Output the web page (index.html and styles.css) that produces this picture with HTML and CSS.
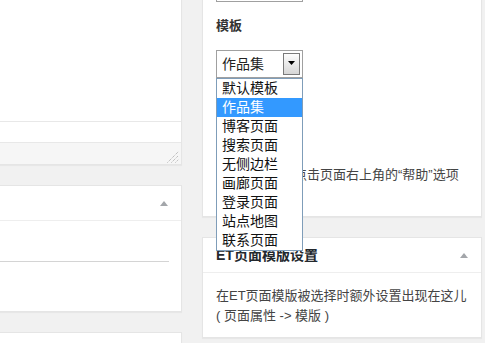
FILE: index.html
```html
<!DOCTYPE html>
<html lang="zh-CN">
  <head>
    <meta charset="UTF-8" />
    <meta name="viewport" content="width=device-width, initial-scale=1.0" />
    <title>编辑页面</title>
    <link rel="stylesheet" href="styles.css">
  </head>
  <body>
    <div class="page">
      <div class="main">
        <div class="box editor-box">
          <div class="editor-area"></div>
          <div class="editor-status"></div>
          <div class="editor-footer">
            <svg class="grip" width="12" height="12" viewBox="0 0 12 12">
              <line x1="0.5" y1="11.5" x2="11.5" y2="0.5" />
              <line x1="4.5" y1="11.5" x2="11.5" y2="4.5" />
              <line x1="8.5" y1="11.5" x2="11.5" y2="8.5" />
            </svg>
          </div>
        </div>

        <div class="box">
          <div class="box-head">
            <span class="title"></span>
            <svg class="toggle" width="8" height="5" viewBox="0 0 8 5"><polygon points="0,5 4,0 8,5" /></svg>
          </div>
          <div class="box-inside excerpt">
            <div class="field"></div>
          </div>
        </div>

        <div class="box">
          <div class="box-head">
            <span class="title"></span>
          </div>
        </div>
      </div>

      <div class="side">
        <div class="box">
          <h2 class="box-head">
            <span class="title">页面属性</span>
            <svg class="toggle" width="8" height="5" viewBox="0 0 8 5"><polygon points="0,5 4,0 8,5" /></svg>
          </h2>
          <div class="box-inside">
            <p class="label">父级</p>
            <div class="select">
              <span>(无父级)</span>
              <span class="select-btn">
                <svg width="7" height="4" viewBox="0 0 7 4"><polygon points="0,0 7,0 3.5,4" /></svg>
              </span>
            </div>

            <p class="label">模板</p>
            <div class="select-wrap">
              <div class="select">
                <span>作品集</span>
                <span class="select-btn">
                  <svg width="7" height="4" viewBox="0 0 7 4"><polygon points="0,0 7,0 3.5,4" /></svg>
                </span>
              </div>
              <ul class="dropdown">
                <li>默认模板</li>
                <li class="selected">作品集</li>
                <li>博客页面</li>
                <li>搜索页面</li>
                <li>无侧边栏</li>
                <li>画廊页面</li>
                <li>登录页面</li>
                <li>站点地图</li>
                <li>联系页面</li>
              </ul>
            </div>

            <p class="label">排序</p>
            <input class="order" type="text" value="0" />

            <p class="help">需要帮助？请点击页面右上角的“帮助”选项卡。</p>
          </div>
        </div>

        <div class="box">
          <h2 class="box-head">
            <span class="title">ET页面模版设置</span>
            <svg class="toggle" width="8" height="5" viewBox="0 0 8 5"><polygon points="0,5 4,0 8,5" /></svg>
          </h2>
          <div class="box-inside">
            <p class="note">在ET页面模版被选择时额外设置出现在这儿<br />( 页面属性 -&gt; 模版 )</p>
          </div>
        </div>
      </div>
    </div>
  </body>
</html>
```

FILE: styles.css
```css
body {
  margin: 0;
  background: #f1f1f1;
  color: #444;
  font-family: "Liberation Sans", "Noto Sans CJK SC", sans-serif;
  font-size: 13px;
  line-height: 20px;
  overflow: hidden;
}
/* page is scrolled down a bit */
.page {
  display: flex;
  gap: 20px;
  margin-top: -109px;
}
.main {
  flex: 0 0 182px;
}
.side {
  flex: 0 0 280px;
}
.box {
  background: #fff;
  border: 1px solid #e5e5e5;
  box-shadow: 0 1px 1px rgba(0, 0, 0, 0.04);
  margin-bottom: 20px;
}
.main .box {
  border-left: 0;
}
.box-head {
  display: flex;
  justify-content: space-between;
  align-items: center;
  height: 35px;
  box-sizing: border-box;
  margin: 0;
  padding: 8px 13px;
  border-bottom: 1px solid #eee;
  font-size: 14px;
  font-weight: bold;
  line-height: 19px;
  color: #23282d;
}
.toggle {
  display: block;
  fill: #a3a6aa;
}
.box-inside {
  padding: 13px 12px 11px 13px;
}

/* editor */
.editor-area {
  height: 229px;
}
.editor-status {
  height: 20px;
  border-top: 1px solid #e8e8e8;
}
.editor-footer {
  display: flex;
  justify-content: flex-end;
  align-items: flex-end;
  height: 22px;
  box-sizing: border-box;
  padding: 0 2px 1px 0;
  border-top: 1px solid #e8e8e8;
  background: #f6f6f6;
}
.grip {
  display: block;
  stroke: #a8a8a8;
  stroke-width: 1;
  stroke-dasharray: 1 1;
}
.excerpt {
  padding: 13px 12px 49px 0;
}
.field {
  height: 27px;
  border-bottom: 1px solid #d4d4d4;
}

/* page attributes */
.label {
  margin: 0 0 14px;
  font-weight: bold;
  color: #333;
}
.select-wrap {
  position: relative;
}
.select {
  display: flex;
  justify-content: space-between;
  align-items: center;
  width: 87px;
  height: 28px;
  box-sizing: border-box;
  margin-bottom: 14px;
  padding: 0 2px 0 5px;
  border: 1px solid #a0a0a0;
  background: #fff;
  color: #222;
  font-size: 14px;
}
.select-btn {
  display: flex;
  justify-content: center;
  padding-top: 7px;
  width: 17px;
  height: 22px;
  box-sizing: border-box;
  border: 1px solid #7a7a7a;
  background: linear-gradient(#fdfdfd, #d6d6d6);
}
.select-btn svg {
  display: block;
  fill: #000;
}
.dropdown {
  position: absolute;
  top: 28px;
  left: 0;
  width: 87px;
  box-sizing: border-box;
  margin: 0;
  padding: 0;
  list-style: none;
  border: 1px solid #7f9db9;
  background: #fff;
  z-index: 5;
}
.dropdown li {
  height: 19px;
  padding-left: 5px;
  font-size: 14px;
  line-height: 19px;
  color: #111;
}
.dropdown li.selected {
  background: #3399ff;
  color: #fff;
}
.order {
  display: block;
  width: 50px;
  height: 28px;
  box-sizing: border-box;
  margin: 0 0 11px;
  border: 1px solid #ddd;
  font: inherit;
}
.help {
  margin: 0;
  color: #444;
}
.note {
  margin: 0;
  color: #444;
}
```
